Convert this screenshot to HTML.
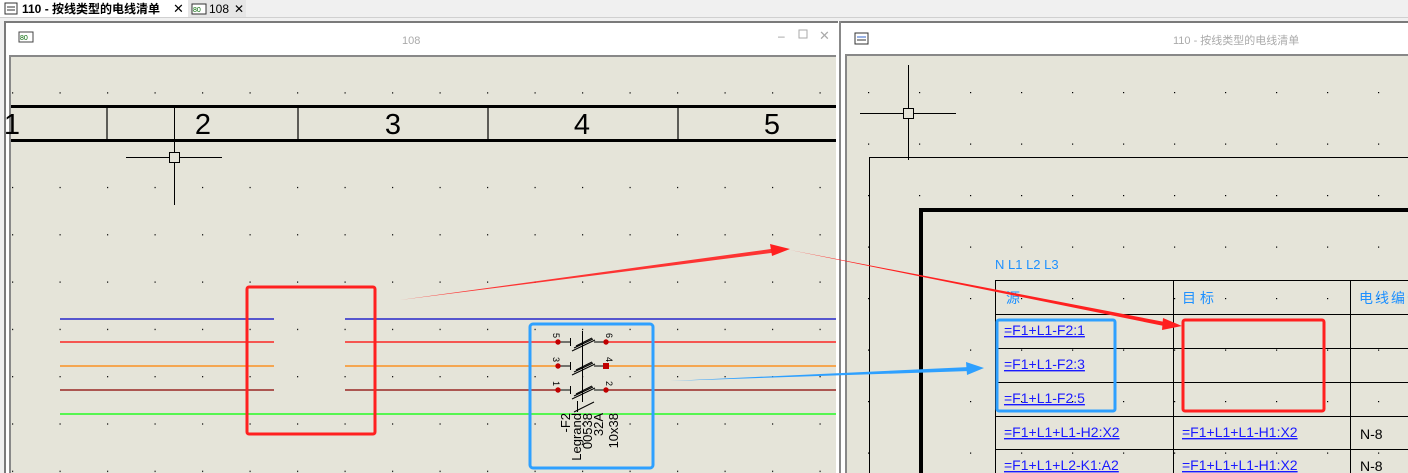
<!DOCTYPE html>
<html><head><meta charset="utf-8"><style>
html,body{margin:0;padding:0;width:1408px;height:473px;overflow:hidden;background:#f0f0f0;font-family:"Liberation Sans","Noto Sans CJK SC",sans-serif}
svg text{font-family:"Liberation Sans","Noto Sans CJK SC",sans-serif}
</style></head><body>
<svg width="1408" height="473" xmlns="http://www.w3.org/2000/svg">
<defs>
<pattern id="dl" x="12" y="45" width="47.5" height="47.3" patternUnits="userSpaceOnUse"><rect x="0" y="0" width="1.2" height="1.2" fill="#000"/></pattern>
<pattern id="dr" x="868" y="92" width="51" height="51.5" patternUnits="userSpaceOnUse"><rect x="0" y="0" width="1.2" height="1.2" fill="#000"/></pattern>
</defs>
<rect x="0" y="0" width="1408" height="18" fill="#f0f0f0"/>
<rect x="0" y="0" width="188" height="18" fill="#fff"/>
<rect x="188" y="0" width="58" height="18" fill="#e6e6e6"/>
<line x1="0" y1="17.5" x2="1408" y2="17.5" stroke="#d0d0d0"/>
<rect x="5" y="3" width="12" height="11" fill="#fff" stroke="#333"/><line x1="7" y1="7" x2="15" y2="7" stroke="#333"/><line x1="7" y1="10" x2="15" y2="10" stroke="#333"/>
<text x="22" y="13" font-size="12" font-weight="bold" fill="#000">110 - 按线类型的电线清单</text>
<text x="173" y="13" font-size="13" fill="#000">✕</text>
<rect x="192" y="4" width="14" height="10" fill="#fff" stroke="#333"/><text x="193" y="12" font-size="7" fill="#060">80</text>
<text x="209" y="13" font-size="12" fill="#000">108</text>
<text x="234" y="13" font-size="12" fill="#000">✕</text>
<rect x="4" y="21" width="836" height="452" fill="#fff"/>
<rect x="4" y="21" width="2" height="452" fill="#7a7a7a"/>
<rect x="4" y="21" width="836" height="2" fill="#7a7a7a"/>
<rect x="9" y="55" width="827" height="418" fill="#e5e4d9"/>
<rect x="9" y="55" width="2" height="418" fill="#888"/>
<rect x="9" y="55" width="827" height="2" fill="#888"/>
<rect x="19" y="32" width="14" height="10" fill="#fff" stroke="#444"/><text x="20" y="40" font-size="7" fill="#060">80</text>
<text x="402" y="44" font-size="11" fill="#aaa">108</text>
<text x="778" y="40" font-size="12" fill="#999">–</text>
<rect x="799" y="30" width="8" height="8" fill="none" stroke="#aaa"/>
<text x="819" y="40" font-size="13" fill="#aaa">✕</text>
<rect x="11" y="57" width="825" height="416" fill="url(#dl)"/>
<rect x="11" y="105" width="825" height="36" fill="#e5e4d9"/>
<rect x="11" y="105" width="825" height="3" fill="#000"/>
<rect x="11" y="139" width="825" height="3" fill="#000"/>
<g stroke="#000" stroke-width="1.2"><line x1="107" y1="107" x2="107" y2="140"/><line x1="298" y1="107" x2="298" y2="140"/><line x1="488" y1="107" x2="488" y2="140"/><line x1="678" y1="107" x2="678" y2="140"/></g>
<g font-size="29" fill="#000" text-anchor="middle"><text x="12" y="134">1</text><text x="203" y="134">2</text><text x="393" y="134">3</text><text x="582" y="134">4</text><text x="772" y="134">5</text></g>
<g stroke="#000" stroke-width="1"><line x1="126" y1="157.5" x2="222" y2="157.5"/><line x1="174.5" y1="108" x2="174.5" y2="205"/><rect x="169.5" y="152.5" width="10" height="10" fill="#e5e4d9"/></g>
<g stroke-width="1.3">
<line x1="60" y1="319" x2="274" y2="319" stroke="#0000c8"/><line x1="345" y1="319" x2="836" y2="319" stroke="#0000c8"/>
<line x1="60" y1="342" x2="274" y2="342" stroke="#f00"/><line x1="345" y1="342" x2="558" y2="342" stroke="#f00"/><line x1="606" y1="342" x2="836" y2="342" stroke="#f00"/>
<line x1="60" y1="366" x2="274" y2="366" stroke="#ff8000"/><line x1="345" y1="366" x2="558" y2="366" stroke="#ff8000"/><line x1="606" y1="366" x2="836" y2="366" stroke="#ff8000"/>
<line x1="60" y1="390" x2="274" y2="390" stroke="#8b0000"/><line x1="345" y1="390" x2="558" y2="390" stroke="#8b0000"/><line x1="606" y1="390" x2="836" y2="390" stroke="#8b0000"/>
<line x1="60" y1="414" x2="836" y2="414" stroke="#00ff00"/>
</g>
<g stroke="#000" stroke-width="1" fill="none">
<line x1="582.5" y1="331" x2="582.5" y2="402"/>
<line x1="558" y1="342" x2="570" y2="342"/><line x1="570.5" y1="338" x2="570.5" y2="346"/><line x1="594" y1="342" x2="606" y2="342"/><line x1="572" y1="351" x2="595" y2="340"/><line x1="574" y1="348" x2="593" y2="339"/><line x1="576" y1="346" x2="592" y2="338"/>
<line x1="558" y1="366" x2="570" y2="366"/><line x1="570.5" y1="362" x2="570.5" y2="370"/><line x1="594" y1="366" x2="606" y2="366"/><line x1="572" y1="375" x2="595" y2="364"/><line x1="574" y1="372" x2="593" y2="363"/><line x1="576" y1="370" x2="592" y2="362"/>
<line x1="558" y1="390" x2="570" y2="390"/><line x1="570.5" y1="386" x2="570.5" y2="394"/><line x1="594" y1="390" x2="606" y2="390"/><line x1="572" y1="399" x2="595" y2="388"/><line x1="574" y1="396" x2="593" y2="387"/><line x1="576" y1="394" x2="592" y2="386"/>
<line x1="574" y1="412" x2="594" y2="402"/><line x1="577.5" y1="401" x2="577.5" y2="412"/>
</g>
<g fill="#c00000"><circle cx="558" cy="342" r="2.7"/><circle cx="606" cy="342" r="2.7"/><circle cx="558" cy="366" r="2.7"/><rect x="603" y="363" width="6" height="6"/><circle cx="558" cy="390" r="2.7"/><circle cx="606" cy="390" r="2.7"/></g>
<g font-size="9" fill="#000">
<text transform="translate(553,333) rotate(90)">5</text><text transform="translate(606,333) rotate(90)">6</text>
<text transform="translate(553,357) rotate(90)">3</text><text transform="translate(606,357) rotate(90)">4</text>
<text transform="translate(553,381) rotate(90)">1</text><text transform="translate(606,381) rotate(90)">2</text>
</g>
<g font-size="13" fill="#000" text-anchor="end">
<text transform="translate(570,413) rotate(-90)">-F2</text>
<text transform="translate(581,413) rotate(-90)">Legrand</text>
<text transform="translate(592,413) rotate(-90)">00538</text>
<text transform="translate(603,413) rotate(-90)">32A</text>
<text transform="translate(618,413) rotate(-90)">10x38</text>
</g>
<rect x="247" y="287" width="128" height="147" rx="2" fill="none" stroke="#ff2020" stroke-width="3"/>
<rect x="530" y="324" width="123" height="144" rx="3" fill="none" stroke="#2ea0ff" stroke-width="3"/>
<rect x="838" y="21" width="3" height="452" fill="#fff"/>
<rect x="839" y="21" width="2" height="452" fill="#888"/>
<rect x="841" y="21" width="567" height="452" fill="#fff"/>
<rect x="841" y="21" width="567" height="2" fill="#7a7a7a"/>
<rect x="845" y="54" width="563" height="419" fill="#e5e4d9"/>
<rect x="845" y="54" width="563" height="2" fill="#888"/>
<rect x="845" y="54" width="2" height="419" fill="#888"/>
<rect x="855" y="33" width="13" height="11" fill="#fff" stroke="#333"/><line x1="857" y1="37" x2="866" y2="37" stroke="#36c"/><line x1="857" y1="40" x2="866" y2="40" stroke="#333"/>
<text x="1173" y="44" font-size="11" fill="#aaa">110 - 按线类型的电线清单</text>
<rect x="847" y="56" width="561" height="417" fill="url(#dr)"/>
<g stroke="#000" stroke-width="1"><line x1="860" y1="113.5" x2="956" y2="113.5"/><line x1="908.5" y1="65" x2="908.5" y2="160"/><rect x="903.5" y="108.5" width="10" height="10" fill="#e5e4d9"/></g>
<rect x="869.5" y="157.5" width="560" height="330" fill="none" stroke="#000"/>
<rect x="921" y="210" width="500" height="280" fill="#e5e4d9" stroke="#000" stroke-width="4"/>
<rect x="923" y="212" width="485" height="261" fill="url(#dr)"/>
<text x="995" y="269" font-size="13" fill="#1e90ff">N L1 L2 L3</text>
<g stroke="#000" stroke-width="1">
<line x1="995.5" y1="280" x2="995.5" y2="473"/><line x1="1173.5" y1="280" x2="1173.5" y2="473"/><line x1="1350.5" y1="280" x2="1350.5" y2="473"/>
<line x1="995" y1="280.5" x2="1408" y2="280.5"/><line x1="995" y1="314.5" x2="1408" y2="314.5"/><line x1="995" y1="348.5" x2="1408" y2="348.5"/><line x1="995" y1="382.5" x2="1408" y2="382.5"/><line x1="995" y1="416.5" x2="1408" y2="416.5"/><line x1="995" y1="449.5" x2="1408" y2="449.5"/>
</g>
<g font-size="14" fill="#1e90ff"><text x="1006" y="303">源</text><text x="1182" y="303" letter-spacing="4">目标</text><text x="1359" y="303" letter-spacing="2">电线编号</text></g>
<g font-size="14" fill="#1a1aff" text-decoration="underline">
<text x="1004" y="335">=F1+L1-F2:1</text>
<text x="1004" y="369">=F1+L1-F2:3</text>
<text x="1004" y="403">=F1+L1-F2:5</text>
<text x="1004" y="437">=F1+L1+L1-H2:X2</text>
<text x="1182" y="437">=F1+L1+L1-H1:X2</text>
<text x="1004" y="470">=F1+L1+L2-K1:A2</text>
<text x="1182" y="470">=F1+L1+L1-H1:X2</text>
</g>
<g font-size="14" fill="#000"><text x="1360" y="439">N-8</text><text x="1360" y="471">N-8</text></g>
<rect x="997" y="320" width="118" height="91" rx="2" fill="none" stroke="#2ea0ff" stroke-width="3"/>
<rect x="1183" y="320" width="141" height="91" rx="2" fill="none" stroke="#ff2020" stroke-width="3"/>
<polygon points="400,300 778,248 779,252" fill="#ff2020" opacity="0.9"/>
<polygon points="770,244 790,249 772,256" fill="#ff2020"/>
<polygon points="790,250 1170,323 1169,327" fill="#ff2020"/>
<polygon points="1163,318 1182,326 1162,330" fill="#ff2020"/>
<polygon points="670,381 970,367 970,371" fill="#2ea0ff"/>
<polygon points="966,362 984,368 967,375" fill="#2ea0ff"/>
</svg>
</body></html>
